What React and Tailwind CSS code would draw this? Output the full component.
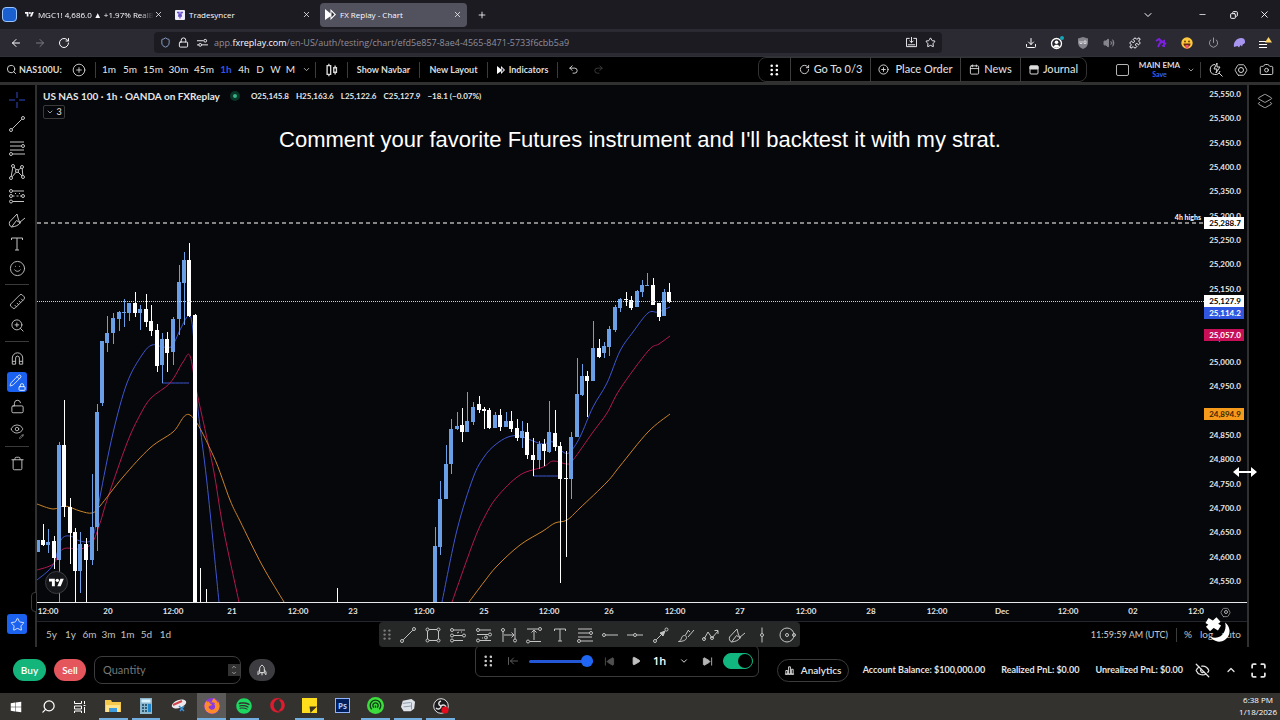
import React from 'react';
import {
    ArrowLeft, ArrowRight, Camera, ChevronDown, ChevronUp, CirclePlus, Copy, Download,
    Eye, EyeOff, Layers2, Lock, LockOpen, Maximize, Minus, Pencil, Play, Plus, Power,
    Puzzle, Redo2, RotateCw, Ruler, Search, Shield, SkipBack, SkipForward,
    Smile, Star, Trash, Undo2, Volume2, X, ZoomIn, Calendar, ArrowLeftToLine, Hexagon,
} from 'lucide-react';
import { FaWindows, FaSpotify, FaOpera, FaFirefoxBrowser } from 'react-icons/fa';

// top-left corner of the plot, candle data is kept in window coordinates
const ORIGIN_X = 37;
const ORIGIN_Y = 85;

// [x, high, bodyTop, bodyBottom, low, up]
const CANDLES = [
    [38, 540, 540, 552, 552, 1], [43, 524, 540, 545, 546, 0], [48, 529, 542, 545, 553, 1],
    [54, 536, 541, 558, 569, 0], [59, 442, 445, 560, 602, 1], [64, 400, 445, 507, 517, 0],
    [70, 498, 507, 533, 564, 0], [75, 528, 532, 571, 602, 0], [80, 532, 544, 571, 593, 1],
    [86, 538, 544, 560, 602, 0], [92, 474, 527, 560, 565, 1], [97, 404, 412, 527, 551, 1],
    [102, 341, 341, 403, 406, 1], [107, 316, 333, 343, 352, 1], [113, 313, 318, 333, 344, 1],
    [119, 311, 312, 319, 331, 1], [124, 299, 312, 313, 327, 1], [129, 303, 303, 313, 321, 1],
    [135, 292, 303, 313, 317, 0], [140, 305, 309, 313, 330, 1], [146, 294, 309, 322, 327, 0],
    [151, 305, 321, 331, 336, 0], [157, 324, 330, 366, 372, 0], [162, 333, 339, 365, 383, 1],
    [167, 332, 339, 353, 372, 0], [173, 317, 319, 352, 365, 1], [179, 265, 282, 319, 335, 1],
    [184, 252, 260, 283, 325, 1], [189, 243, 260, 316, 317, 0], [195, 314, 315, 602, 602, 0],
    [200, 568, 602, 602, 602, 0], [206, 589, 602, 602, 602, 0], [337, 588, 602, 602, 602, 0],
    [435, 527, 546, 602, 602, 1], [440, 481, 499, 547, 555, 1], [446, 445, 464, 499, 499, 1],
    [451, 419, 429, 464, 474, 1], [457, 412, 426, 429, 430, 1], [462, 408, 425, 432, 442, 0],
    [467, 392, 421, 432, 432, 1], [473, 402, 407, 422, 425, 1], [479, 396, 404, 410, 413, 0],
    [484, 407, 409, 411, 429, 0], [489, 408, 410, 428, 429, 0], [495, 412, 415, 428, 428, 1],
    [500, 409, 415, 427, 431, 0], [506, 412, 421, 427, 427, 1], [511, 411, 421, 429, 432, 0],
    [517, 419, 428, 438, 441, 0], [522, 421, 431, 438, 448, 1], [527, 423, 432, 455, 459, 0],
    [533, 438, 455, 460, 476, 0], [539, 441, 444, 460, 469, 1], [544, 439, 444, 451, 466, 0],
    [549, 401, 432, 452, 453, 1], [555, 410, 433, 447, 451, 0], [560, 442, 446, 479, 583, 0],
    [566, 451, 478, 479, 557, 0], [571, 432, 437, 479, 499, 1], [577, 358, 394, 437, 437, 1],
    [582, 364, 376, 395, 396, 1], [587, 371, 376, 381, 417, 0], [593, 321, 348, 381, 381, 1],
    [599, 339, 348, 357, 358, 0], [604, 342, 346, 353, 358, 1], [609, 326, 329, 347, 356, 1],
    [615, 305, 307, 330, 332, 1], [620, 298, 299, 308, 312, 1], [626, 292, 299, 300, 306, 0],
    [631, 296, 300, 308, 310, 0], [637, 290, 291, 307, 307, 1], [642, 280, 285, 292, 297, 1],
    [647, 273, 285, 286, 286, 1], [653, 278, 285, 305, 305, 0], [659, 303, 303, 317, 321, 0],
    [664, 289, 292, 316, 316, 1], [669, 283, 292, 302, 303, 0],
];

const AVERAGES = [
    { color: '#3f56d0', points: '37,580 53,565 61,540 70,536 80,541 91,540 97,520 100,497 113,433 127,383 142,355 152,345 163,347 172,346 180,330 187,317 191,318 194,343 197,400 207,483 219,602' },
    { color: '#3f56d0', points: '442,602 457,530 473,478 484,457 495,445 508,437 520,436 533,441 543,444 553,442 563,452 570,452 580,437 593,407 607,383 620,351 633,332 648,313 658,312 670,307' },
    { color: '#3f56d0', points: '162,383 189,383' },
    { color: '#3f56d0', points: '533,476 560,476' },
    { color: '#b4174f', points: '37,570 53,564 63,549 80,549 92,543 100,523 108,497 127,443 140,415 151,398 170,383 183,362 190,356 197,393 213,467 223,527 239,602' },
    { color: '#b4174f', points: '452,602 473,543 484,518 497,497 520,475 543,467 553,461 567,464 573,460 593,432 607,413 620,389 648,351 659,344 670,336' },
    { color: '#cc8427', points: '37,504 53,509 65,506 80,511 92,513 100,506 123,477 150,448 173,432 190,415 213,455 230,500 240,521 262,565 284,602' },
    { color: '#cc8427', points: '469,602 484,582 497,566 520,545 543,531 555,523 567,520 580,508 607,482 620,466 648,432 670,414' },
];

const TIME_LABELS = [
    [48, '12:00'], [108, '20'], [173, '12:00'], [232, '21'], [298, '12:00'], [353, '23'],
    [424, '12:00'], [484, '25'], [549, '12:00'], [609, '26'], [675, '12:00'], [740, '27'],
    [806, '12:00'], [871, '28'], [937, '12:00'], [1002, 'Dec'], [1068, '12:00'], [1133, '02'],
    [1196, '12:0'],
];

const PRICE_TAGS = [
    { y: 223, text: '25,288.7', box: 'fill-white', label: 'fill-black' },
    { y: 301, text: '25,127.9', box: 'fill-white', label: 'fill-black' },
    { y: 313, text: '25,114.2', box: 'fill-[#3157e0]', label: 'fill-white' },
    { y: 335, text: '25,057.0', box: 'fill-[#c70f57]', label: 'fill-white' },
    { y: 414, text: '24,894.9', box: 'fill-[#f59a1b]', label: 'fill-[#3a2400]' },
];

// one entry every 50 points from 25,550 down to 24,550
const PRICES = Array.from({ length: 21 }, (_, i) => 25550 - i * 50);

const formatPrice = (price) => price.toLocaleString('en-US', { minimumFractionDigits: 1 });

// Catmull-Rom spline through the points, written as cubic segments
function smoothPath(points) {
    const pts = points.split(' ').map((p) => p.split(',').map(Number));
    let d = `M${pts[0]}`;
    for (let i = 0; i < pts.length - 1; i++) {
        const [x0, y0] = pts[i - 1] || pts[i];
        const [x1, y1] = pts[i];
        const [x2, y2] = pts[i + 1];
        const [x3, y3] = pts[i + 2] || pts[i + 1];
        d += `C${x1 + (x2 - x0) / 6},${y1 + (y2 - y0) / 6} ${x2 - (x3 - x1) / 6},${y2 - (y3 - y1) / 6} ${x2},${y2}`;
    }
    return d;
}

// drawing tool glyphs on an 18px grid
const GLYPHS = {
    cross: { d: 'M9 1v6M9 11v6M1 9h6M11 9h6' },
    trend: { d: 'M4.2 13.8 13.8 4.2', dots: [[3, 15], [15, 3]] },
    fib: { d: 'M2 3h14M2 7h11.5M2 11h14M4.5 15h12.5', dots: [[15, 7], [3, 15]] },
    pattern: { d: 'M4.8 4.4 3.2 13.5M4 13.9l4.2-4.8M10 9l4 4M14.2 5.4l.6 7.2M13 5 10 7.2M6 4l2.2 3', dots: [[5, 3], [14, 4], [9, 8], [3, 15], [15, 14]] },
    forecast: { d: 'M4.5 4H16M4.5 9h2M8.5 9h2M12 9h1.5M4.5 14.5H16M7 6.5h1M11 6.5h1', dots: [[3, 4], [3, 9], [15, 9], [3, 14.5]] },
    brush: { d: 'M1.5 11 9 3l1.5 6 2 2.500c-2 3-5 4-9 4.500C1.500 15 1 13 1.500 11zM3.500 16l5-6.500 4 2.500M11.500 11.500 17 7' },
    text: { d: 'M3.500 5V3h11v2M9 3v12M7 15h4' },
    rect: { d: 'M5 3.500h8M5 14.500h8M3.500 5v8M14.500 5v8', dots: [[3.500, 3.500], [14.500, 3.500], [3.500, 14.500], [14.500, 14.500]] },
    longPos: { d: 'M4.500 4H16M4.500 9.500h9M4.500 14.500H14M8 7l2-1M12 6h1', dots: [[3, 4], [3, 9.500], [15, 9.500], [3, 14.500]] },
    shortPos: { d: 'M4.500 4H16M2 8.500h11M4.500 14.500H16M7 12h1M11 11h1', dots: [[3, 4], [15, 8.500], [3, 14.500], [11, 11.500]] },
    dateRange: { d: 'M3 5v11M15 2v11M4 9h10M11.500 6.500 14 9l-2.500 2.500', dots: [[3, 4], [15, 14.500]] },
    priceRange: { d: 'M2 3h11M5 15.500h11M9 4v10M6.500 6.500 9 4l2.500 2.500', dots: [[15, 3], [3, 15.500]] },
    ray: { d: 'M4.500 9H17', dots: [[3, 9]] },
    hline: { d: 'M1 9h6.500M10.500 9H17', dots: [[9, 9]] },
    arrow: { d: 'M4.200 13.800 13 5M8 7l5-2-2 5z', dots: [[3, 15], [14.500, 3.500]], solid: true },
    highlighter: { d: 'M1.500 15.500c4-1 2-6 6-6 3 0 4 6-6 6zM8.500 9l3-5M11 11l6-7M11 4l2 2' },
    path: { d: 'M2 13 6 6l4 6 6-7M12.500 4.500H16V8', dots: [[2, 13], [10, 12]] },
    vline: { d: 'M9 1.500v6M9 10.500v6', dots: [[9, 9]] },
    circle: { d: 'M16 9A7 7 0 1 1 2 9a7 7 0 0 1 14 0z', dots: [[16, 9], [9, 9]] },
    magnet: { d: 'M3.500 15V8.500a5.500 5.500 0 0 1 11 0V15h-3.500V8.500a2 2 0 0 0-4 0V15zM3.500 12H7M11 12h3.500' },
    candles: { d: 'M5.500 2v2M5.500 14v2M3.500 4h4v10h-4zM12.500 4v2.500M12.500 11.500V14M11 6.500h3v5h-3z' },
    bars: { d: 'M3 15V9h3v6zM7.500 15V3h3v12zM12 15V7h3v8zM1.500 15h15' },
    rocket: { d: 'M5.500 13V7c0-2 1.500-4 3.500-5.500C11 3 12.500 5 12.500 7v6zM5.500 9 3 11.500V16l2.500-2.500M12.500 9l2.500 2.500V16l-2.500-2.500M9 12v5' },
};

const FAVOURITES = [
    'trend', 'rect', 'longPos', 'shortPos', 'dateRange', 'priceRange', 'text', 'fib',
    'ray', 'hline', 'arrow', 'highlighter', 'path', 'brush', 'vline', 'circle',
];

function Glyph({ name, size = 18, weight = 1 }) {
    const { d, dots = [], solid } = GLYPHS[name];
    return (
        <svg width={size} height={size} viewBox="0 0 18 18" fill="none" stroke="currentColor" strokeWidth={weight}>
            <path d={d} fill={solid ? 'currentColor' : 'none'} />
            {dots.map(([cx, cy]) => <circle key={`${cx}-${cy}`} cx={cx} cy={cy} r="1.500" />)}
        </svg>
    );
}

function TradingViewMark({ className }) {
    return (
        <svg viewBox="0 0 36 26" fill="currentColor" className={className}>
            <path d="M14 22H7V11H0V4h14v18zM28 22h-8l7.500-18h8L28 22z" />
            <circle cx="20" cy="8" r="4" />
        </svg>
    );
}

function ReplayMark({ className }) {
    return (
        <svg viewBox="0 0 12 12" className={className}>
            <path d="M0 0l6 5v-5l6 6-6 6V8l-6 4z" fill="#fff" />
            <path d="M7 2.800 10.200 6 7 9.200z" fill="#33323c" />
        </svg>
    );
}

function DragDots({ className }) {
    return (
        <svg viewBox="0 0 10 14" fill="currentColor" className={className}>
            {[2, 7, 12].map((y) => [2, 8].map((x) => <circle key={`${x}-${y}`} cx={x} cy={y} r="1.500" />))}
        </svg>
    );
}

function IconButton({ label, className = '', children }) {
    return (
        <button type="button" aria-label={label} className={`flex shrink-0 items-center justify-center ${className}`}>
            {children}
        </button>
    );
}

function Divider({ className = 'h-4' }) {
    return <div className={`w-px shrink-0 bg-[#3c3c3c] ${className}`} />;
}

function TabStrip() {
    return (
        <div className="flex h-[29px] shrink-0 items-center bg-[#1c1b22] text-[8px] font-medium text-[#fbfbfe]">
            <div className="ml-0.5 size-[15px] rounded-[4px] border border-[#9cc4ff] bg-[#1a5fd0]" />
            <div className="ml-2 flex w-[138px] items-center">
                <TradingViewMark className="w-[10px]" />
                <span className="ml-1 flex-1 whitespace-nowrap [mask-image:linear-gradient(to_right,#000_88%,transparent)]">MGC1! 4,686.0 ▲ +1.97% RealB</span>
                <IconButton label="Close tab"><X size={9} /></IconButton>
            </div>
            <div className="ml-3 flex w-[136px] items-center">
                <svg viewBox="0 0 10 10" className="size-[10px]">
                    <rect width="10" height="10" rx="1" fill="#f1eefc" />
                    <path d="M2 2.500h2v2h2v-2h2M3 6h4M5 4.500v4" stroke="#6552c8" strokeWidth="1.300" fill="none" />
                </svg>
                <span className="ml-1 flex-1">Tradesyncer</span>
                <IconButton label="Close tab"><X size={9} /></IconButton>
            </div>
            <div className="ml-[9px] flex h-6 w-[147px] items-center rounded-[4px] bg-[#52515e] px-[5px]">
                <ReplayMark className="size-[11px]" />
                <span className="ml-1 flex-1">FX Replay - Chart</span>
                <IconButton label="Close tab"><X size={9} /></IconButton>
            </div>
            <IconButton label="New tab" className="ml-2.5"><Plus size={10} /></IconButton>
            <div className="ml-auto flex items-center">
                <IconButton label="List tabs" className="mr-6 w-[31px]"><ChevronDown size={12} /></IconButton>
                <IconButton label="Minimize" className="w-[31px]"><Minus size={9} /></IconButton>
                <IconButton label="Restore" className="w-[31px]"><Copy size={8} strokeWidth={3} className="-scale-x-100" /></IconButton>
                <IconButton label="Close window" className="w-[31px]"><X size={11} /></IconButton>
            </div>
        </div>
    );
}

function AddressBar() {
    return (
        <div className="flex h-[27px] shrink-0 items-center bg-[#2b2a33] text-[#fbfbfe]">
            <div className="flex w-[154px] shrink-0 items-center pl-1">
                <IconButton label="Back" className="w-6"><ArrowLeft size={12} /></IconButton>
                <IconButton label="Forward" className="w-6 text-[#7b7a84]"><ArrowRight size={12} /></IconButton>
                <IconButton label="Reload" className="w-6"><RotateCw size={12} /></IconButton>
            </div>
            <div className="flex h-[21px] flex-1 items-center rounded-[4px] bg-[#1c1b22] px-1.5">
                <Shield size={11} className="text-[#8fa9cf]" />
                <Lock size={11} className="ml-[7px]" />
                <svg viewBox="0 0 12 10" className="ml-2 w-[11px]" fill="none" stroke="currentColor">
                    <path d="M0 3h7M5 7.500h7M0 7.500h2" />
                    <circle cx="9" cy="3" r="1.500" />
                    <circle cx="3.500" cy="7.500" r="1.500" />
                </svg>
                <span className="ml-1.5 flex-1 text-[9px] text-[#8f8e99]">
                    app.<span className="text-[#fbfbfe]">fxreplay.com</span>/en-US/auth/testing/chart/efd5e857-8ae4-4565-8471-5733f6cbb5a9
                </span>
                <svg viewBox="0 0 12 12" className="size-[11px]" fill="none" stroke="currentColor">
                    <path d="M4 1.500H.500v9h11v-9H8M6 0v6M3.800 4 6 6.200 8.200 4M2 8.500h8" />
                </svg>
                <IconButton label="Bookmark this page" className="ml-2"><Star size={11} /></IconButton>
            </div>
            <div className="ml-[76px] mr-[2px] flex">
                <IconButton label="Downloads" className="w-[26px]"><Download size={12} /></IconButton>
                <IconButton label="Account" className="w-[26px]">
                    <svg viewBox="0 0 14 14" className="size-[14px]">
                        <circle cx="6.500" cy="7.500" r="5" fill="none" stroke="#fff" strokeWidth="1.300" />
                        <circle cx="6.500" cy="6.300" r="1.800" fill="#fff" />
                        <path d="M3.500 10.500c1-2.500 5-2.500 6 0-1 1.500-5 1.500-6 0z" fill="#fff" />
                        <circle cx="12" cy="2" r="2" fill="#14a6b5" />
                    </svg>
                </IconButton>
                <IconButton label="Content blocker" className="w-[26px]">
                    <svg viewBox="0 0 12 12" className="size-3">
                        <path d="M6 0 11 1.500v4C11 9 8.500 11 6 12 3.500 11 1 9 1 5.500v-4z" fill="#85848d" />
                        <path d="M3 4v2.500h2V4M7 4h2v2.500H7z" stroke="#d7d6dc" fill="none" />
                    </svg>
                </IconButton>
                <IconButton label="Volume" className="w-[26px] text-[#85848d]"><Volume2 size={12} fill="currentColor" /></IconButton>
                <IconButton label="Extensions" className="w-[26px]"><Puzzle size={12} /></IconButton>
                <IconButton label="Trading extension" className="w-[26px]">
                    <svg viewBox="0 0 12 12" className="size-3" fill="none" stroke="#7a1fe0" strokeWidth="2">
                        <path d="M1 4l3-2 2 2-3 6M5 6l4-2v6M7 9l4-3" />
                    </svg>
                </IconButton>
                <IconButton label="Emoji" className="w-[26px]">
                    <svg viewBox="0 0 12 12" className="size-3">
                        <circle cx="6" cy="6" r="5.700" fill="#ffc83d" />
                        <circle cx="4" cy="4.500" r=".9" fill="#5b3a00" />
                        <circle cx="8" cy="4.500" r=".9" fill="#5b3a00" />
                        <path d="M2.500 6.500h7c0 2-1.500 3.500-3.500 3.500S2.500 8.500 2.500 6.500z" fill="#6b2b12" />
                        <path d="M4.500 8h3v2.500c-.5 1.300-2.500 1.300-3 0z" fill="#f2507b" />
                    </svg>
                </IconButton>
                <IconButton label="Power" className="w-[26px] text-[#a3a2ab]"><Power size={11} /></IconButton>
                <IconButton label="Feather" className="w-[26px]">
                    <svg viewBox="0 0 12 12" className="size-3">
                        <path d="M1 10C0 5 4 1 8 1c3 0 4 1.500 4 4 0 1.500-1 2-2 2L9 9.500 7.500 8 6 10.500 4.500 9z" fill="#a795ef" />
                    </svg>
                </IconButton>
                <IconButton label="Open menu" className="w-[26px]">
                    <svg viewBox="0 0 14 12" className="w-[14px]" fill="none" stroke="#fff">
                        <path d="M1 4.500h7M1 7.500h8M1 10.500h8" />
                        <path d="M10.500 0l3.500 5.500H7z" fill="#ffd567" stroke="none" />
                    </svg>
                </IconButton>
            </div>
        </div>
    );
}

function ChartToolbar() {
    const intervals = [
        ['1m', 'w-5'], ['5m', 'w-[22px]'], ['15m', 'w-6'], ['30m', 'w-[27px]'], ['45m', 'w-6'],
        ['1h', 'w-5'], ['4h', 'w-4'], ['D', 'w-4'], ['W', 'w-[15px]'], ['M', 'w-[15px]'],
    ];
    return (
        <div className="flex h-[26px] shrink-0 items-center border-t border-[#303038] bg-black text-[10px] font-medium text-[#dcdcdc]">
            <button type="button" className="flex w-[62px] items-center gap-0.5 whitespace-nowrap pl-1.5 text-[9px] font-bold">
                <Search size={11} className="shrink-0" />
                NAS100U:
            </button>
            <IconButton label="Compare symbol" className="w-[33px]"><CirclePlus size={14} strokeWidth={1.500} /></IconButton>
            <Divider />
            <div className="ml-[3px] flex">
                {intervals.map(([name, width]) => (
                    <button key={name} type="button" className={`${width} text-center ${name === '1h' ? 'font-bold text-[#2f55e8]' : ''}`}>{name}</button>
                ))}
            </div>
            <IconButton label="More intervals" className="w-[17px]"><ChevronDown size={9} /></IconButton>
            <Divider />
            <IconButton label="Chart type" className="w-[31px]"><Glyph name="candles" size={16} weight={1.5} /></IconButton>
            <Divider />
            <button type="button" className="w-[71px] text-center text-[9px] font-bold">Show Navbar</button>
            <Divider />
            <button type="button" className="w-[67px] text-center text-[9px] font-bold">New Layout</button>
            <Divider />
            <button type="button" className="flex w-[69px] items-center justify-center gap-1 text-[9px] font-bold">
                <ReplayMark className="size-2" />
                Indicators
            </button>
            <Divider />
            <IconButton label="Undo" className="w-[30px]"><Undo2 size={11} /></IconButton>
            <IconButton label="Redo" className="w-5 text-[#3f3f3f]"><Redo2 size={11} /></IconButton>

            <div className="ml-auto flex h-[25px] items-center rounded-lg border border-[#333] text-[11px]">
                <IconButton label="Move panel" className="w-[31px]"><DragDots className="h-3 text-white" /></IconButton>
                <Divider className="h-[25px]" />
                <button type="button" className="flex w-[79px] items-center justify-center gap-1"><RotateCw size={11} />Go To 0/3</button>
                <Divider className="h-[25px]" />
                <button type="button" className="flex w-[89px] items-center justify-center gap-1.5"><CirclePlus size={11} />Place Order</button>
                <Divider className="h-[25px]" />
                <button type="button" className="flex w-[59px] items-center justify-center gap-1"><Calendar size={11} />News</button>
                <Divider className="h-[25px]" />
                <button type="button" className="flex w-[65px] items-center justify-center gap-1">
                    <svg viewBox="0 0 10 10" className="size-[10px]" fill="none" stroke="currentColor">
                        <rect x="1" y="1" width="8" height="8" rx="1" />
                        <path d="M1 1h8v3H1z" fill="currentColor" />
                    </svg>
                    Journal
                </button>
            </div>

            <div className="ml-[29px] flex items-center">
                <div className="h-3 w-[13px] rounded-[2px] border border-[#b5b5b5]" />
                <button type="button" className="flex w-[59px] flex-col items-center pl-0.5 text-[8px] font-bold leading-[9px] whitespace-nowrap">
                    MAIN EMA
                    <span className="text-[7px] leading-[8px] text-[#2f62f5]">Save</span>
                </button>
                <IconButton label="Layouts" className="mr-1.5 w-[6px]"><ChevronDown size={8} className="shrink-0" /></IconButton>
                <Divider />
                <IconButton label="Quick search" className="w-[29px]">
                    <svg viewBox="0 0 14 14" className="size-[14px]" fill="none" stroke="currentColor">
                        <path d="M6 1.500a5 5 0 1 0 5 6.500M10 10l3.500 3.500M8 0 5 6h3l-1 4 4-6H8z" />
                    </svg>
                </IconButton>
                <IconButton label="Settings" className="w-[22px]">
                    <span className="grid place-items-center">
                        <Hexagon size={14} strokeWidth={1.500} className="col-start-1 row-start-1 rotate-90" />
                        <span className="col-start-1 row-start-1 size-1.5 rounded-full border border-current" />
                    </span>
                </IconButton>
                <IconButton label="Snapshot" className="w-[28px]"><Camera size={15} strokeWidth={1.500} /></IconButton>
            </div>
        </div>
    );
}

function ToolRail() {
    const separator = <div className="flex h-[9px] w-6 items-center"><div className="h-px w-full bg-[#3a3a3a]" /></div>;
    const tool = (label, icon) => <IconButton label={label} className="size-6">{icon}</IconButton>;
    return (
        <div className="flex w-[35px] shrink-0 flex-col items-center bg-black pr-px pt-[3px] text-[#c4c4c4]">
            <IconButton label="Cross" className="size-6 text-[#3148c8]"><Glyph name="cross" /></IconButton>
            {tool('Trend line', <Glyph name="trend" />)}
            {tool('Fib retracement', <Glyph name="fib" />)}
            {tool('Patterns', <Glyph name="pattern" />)}
            {tool('Forecasting', <Glyph name="forecast" />)}
            {tool('Brush', <Glyph name="brush" />)}
            {tool('Text', <Glyph name="text" />)}
            {tool('Icons', <Smile size={17} strokeWidth={1.300} />)}
            {separator}
            {tool('Measure', <Ruler size={17} strokeWidth={1.300} className="rotate-90" />)}
            {tool('Zoom in', <ZoomIn size={15} strokeWidth={1.500} />)}
            {separator}
            {tool('Magnet', <Glyph name="magnet" size={17} />)}
            <IconButton label="Stay in drawing mode" className="h-6 w-5">
                <span className="grid size-5 place-items-center rounded-[3px] bg-[#1b62f0] text-white">
                    <Pencil size={13} strokeWidth={1.500} className="col-start-1 row-start-1 mb-1 mr-1" />
                    <Lock size={8} strokeWidth={2.500} className="col-start-1 row-start-1 ml-2.5 mt-2.5" />
                </span>
            </IconButton>
            {tool('Lock drawings', <LockOpen size={15} strokeWidth={1.500} />)}
            <IconButton label="Hide drawings" className="size-6">
                <span className="flex flex-col items-end">
                    <Eye size={14} strokeWidth={1.500} />
                    <Pencil size={5} strokeWidth={2.500} className="-mt-0.5" />
                </span>
            </IconButton>
            {separator}
            {tool('Remove drawings', <Trash size={15} strokeWidth={1.500} />)}
            <IconButton label="Favorites" className="mb-[13px] mt-auto size-5 rounded-[3px] bg-[#1b62f0] text-white"><Star size={15} strokeWidth={1.300} /></IconButton>
        </div>
    );
}

function Plot() {
    return (
        <svg className="block size-full">
            <g transform={`translate(${-ORIGIN_X} ${-ORIGIN_Y})`}>
                {AVERAGES.map(({ color, points }) => (
                    <path key={points} d={smoothPath(points)} fill="none" stroke={color} strokeWidth="1" />
                ))}
                <g shapeRendering="crispEdges">
                    {CANDLES.map(([x, high, top, bottom, low, up]) => (
                        <g key={x} fill={up ? '#6a9fe6' : '#ffffff'}>
                            <rect x={x} y={high} width="1" height={low - high} />
                            <rect x={x - 2} y={top} width="4" height={bottom - top} />
                        </g>
                    ))}
                </g>
            </g>
            <line x1="0" x2="100%" y1="138" y2="138" stroke="#858585" strokeWidth="2" strokeDasharray="4 3" />
            <line x1="0" x2="100%" y1="216.5" y2="216.5" stroke="#d0d0d0" strokeDasharray="1 1" />
        </svg>
    );
}

function PriceScale() {
    return (
        <svg className="block h-full w-[43px] shrink-0 text-[8px] font-bold">
            {PRICES.map((price, i) => (
                <text key={price} x="21" y={Math.round(i * 24.35) + 12} textAnchor="middle" className="fill-[#e4e4e4]">{formatPrice(price)}</text>
            ))}
            {PRICE_TAGS.map(({ y, text, box, label }) => (
                <g key={text}>
                    <rect x="0" y={y - ORIGIN_Y - 6} width="40" height="12" className={box} />
                    <text x="21" y={y - ORIGIN_Y + 3} textAnchor="middle" className={label}>{text}</text>
                </g>
            ))}
        </svg>
    );
}

function ChartPane() {
    return (
        <div className="flex min-w-0 flex-1 flex-col border-x-2 border-[#303030] bg-[#05070b]">
            <div className="relative flex min-h-0 flex-1 border-b border-[#e8e8e8]">
                <div className="min-w-0 flex-1"><Plot /></div>
                <PriceScale />
                <div className="absolute left-1.5 top-1 text-[#e6e6e6]">
                    <div className="flex items-center whitespace-nowrap">
                        <h1 className="text-[10px] font-bold leading-[14px]">US NAS 100 · 1h · OANDA on FXReplay</h1>
                        <span className="ml-2.5 size-2.5 rounded-full border-[3px] border-[#0a3527] bg-[#35b487]" />
                        <span className="ml-[11px] flex gap-[7px] text-[8px] font-bold">
                            <span>O25,145.8</span>
                            <span>H25,163.6</span>
                            <span>L25,122.6</span>
                            <span>C25,127.9</span>
                            <span>−18.1 (−0.07%)</span>
                        </span>
                    </div>
                    <button type="button" className="mt-0.5 flex h-3.5 w-[22px] items-center justify-center gap-0.5 rounded-[2px] border border-[#3a3a3a] text-[9px]">
                        <ChevronDown size={8} />3
                    </button>
                </div>
                <p className="absolute inset-x-0 top-[43px] pr-1 text-center font-['Liberation_Sans',sans-serif] text-[22px] leading-6 text-white">
                    Comment your favorite Futures instrument and I'll backtest it with my strat.
                </p>
                <span className="absolute right-[46px] top-[127px] text-[7px] font-bold leading-[10px] text-white">4h highs</span>
                <div className="absolute bottom-2 left-2 flex size-[23px] items-center justify-center rounded-full border border-[#3c3d42] bg-[#15161a] text-white">
                    <TradingViewMark className="w-[15px]" />
                </div>
                <div className="absolute -bottom-2.5 -left-1.5 h-5 w-1.5 rounded-l border border-[#3a3a3a] bg-black" />
                <svg viewBox="0 0 24 12" className="absolute -right-2.5 top-[381px] z-10 w-6" fill="#fff">
                    <path d="M0 6l6-5v4h12V1l6 5-6 5V7H6v4z" />
                </svg>
            </div>
            <div className="flex h-[19px] shrink-0 items-center border-b border-[#24262b]">
                <svg className="h-[18px] min-w-0 flex-1 text-[8px] font-bold">
                    {TIME_LABELS.map(([x, text]) => (
                        <text key={x} x={x - ORIGIN_X} y="11" textAnchor="middle" className="fill-[#e4e4e4]">{text}</text>
                    ))}
                </svg>
                <IconButton label="Scale settings" className="w-[43px] text-[#b0b0b0]">
                    <span className="grid place-items-center">
                        <Hexagon size={11} strokeWidth={1.500} className="col-start-1 row-start-1 rotate-90" />
                        <span className="col-start-1 row-start-1 size-1 rounded-full border border-current" />
                    </span>
                </IconButton>
            </div>
            <div className="flex h-[25px] shrink-0 items-center bg-black pl-[5px] pr-1.5 text-[10px] text-[#c2c2c2]">
                {['5y', '1y', '6m', '3m', '1m', '5d', '1d'].map((range) => (
                    <button key={range} type="button" className="w-[19px] text-center">{range}</button>
                ))}
                <button type="button" className="ml-auto mr-2 text-[9px] font-medium">11:59:59 AM (UTC)</button>
                <Divider className="h-3.5" />
                <button type="button" className="ml-[7px]">%</button>
                <button type="button" className="ml-2">log</button>
                <button type="button" className="ml-2">auto</button>
            </div>
        </div>
    );
}

function FavouritesBar() {
    return (
        <div className="absolute left-[379px] top-[622px] flex h-[25px] w-[421px] items-center rounded bg-[#262727] pl-1 text-[#c4c4c4]">
            <DragDots className="mr-1 w-2 text-[#7c7c7c]" />
            {FAVOURITES.map((name) => (
                <IconButton key={name} label={name} className="flex-1"><Glyph name={name} /></IconButton>
            ))}
        </div>
    );
}

function PlaybackBar() {
    return (
        <div className="absolute left-[475px] top-[645px] flex h-8 w-[284px] items-center rounded-md border border-[#3a3a3a] bg-black text-[#a9a9a9]">
            <IconButton label="Move playback bar" className="w-6 text-[#c9c9c9]"><DragDots className="h-3" /></IconButton>
            <IconButton label="Jump to start" className="w-[26px] text-[#5c5c5c]"><ArrowLeftToLine size={12} /></IconButton>
            <input
                type="range"
                aria-label="Playback speed"
                defaultValue="100"
                className="ml-[3px] h-[3px] w-16 appearance-none rounded-full bg-[#2457d6] [&::-webkit-slider-thumb]:size-3 [&::-webkit-slider-thumb]:appearance-none [&::-webkit-slider-thumb]:rounded-full [&::-webkit-slider-thumb]:bg-[#1f66f5]"
            />
            <IconButton label="Step back" className="w-8 text-[#505050]"><SkipBack size={11} fill="currentColor" /></IconButton>
            <IconButton label="Play" className="w-[22px] text-[#c0c0c0]"><Play size={10} fill="currentColor" /></IconButton>
            <div className="ml-1.5 flex items-center text-white">
                <select aria-label="Step interval" defaultValue="1h" className="w-[26px] appearance-none bg-transparent text-[11px] font-semibold">
                    <option>1h</option>
                    <option>4h</option>
                </select>
                <ChevronDown size={10} />
            </div>
            <IconButton label="Step forward" className="w-9 text-[#b5b5b5]"><SkipForward size={11} fill="currentColor" /></IconButton>
            <input
                type="checkbox"
                role="switch"
                aria-label="Replay mode"
                defaultChecked
                className="-ml-0.5 flex h-4 w-[30px] appearance-none items-center justify-end rounded-full border border-[#12b77f] bg-[#12b77f] before:size-3.5 before:rounded-full before:bg-black"
            />
        </div>
    );
}

function OrderBar() {
    return (
        <div className="flex h-[46px] shrink-0 items-center bg-black pl-[13px] text-[10px] font-semibold text-[#e4e4e4]">
            <button type="button" className="h-[22px] w-[33px] rounded-full bg-[#13b57b] text-white">Buy</button>
            <button type="button" className="ml-2 h-[22px] w-8 rounded-full bg-[#e5555c] text-white">Sell</button>
            <div className="ml-2 flex h-7 w-[147px] items-center rounded-lg border border-[#3c3c3c] pl-2">
                <input aria-label="Quantity" placeholder="Quantity" className="min-w-0 flex-1 bg-transparent text-[11px] font-normal outline-none placeholder:text-[#777]" />
                <div className="flex h-3 w-3 flex-col items-center justify-center bg-[#333] text-[#bbb]">
                    <ChevronUp size={6} strokeWidth={3} />
                    <ChevronDown size={6} strokeWidth={3} />
                </div>
            </div>
            <IconButton label="Quick order" className="ml-2 h-[22px] w-[26px] rounded-full bg-[#3d3d41]"><Glyph name="rocket" size={12} weight={1.5} /></IconButton>
            <button type="button" className="ml-auto flex h-[23px] w-[72px] items-center justify-center gap-1.5 rounded-full border border-[#3c3c3c]">
                <Glyph name="bars" size={11} weight={1.5} />
                Analytics
            </button>
            <div className="ml-3.5 flex gap-4 text-[9px] font-bold">
                <span>Account Balance: $100,000.00</span>
                <span>Realized PnL: $0.00</span>
                <span>Unrealized PnL: $0.00</span>
            </div>
            <IconButton label="Hide balances" className="ml-1 w-[31px]"><EyeOff size={15} /></IconButton>
            <IconButton label="Expand" className="w-[26px]"><ChevronUp size={12} strokeWidth={2.500} /></IconButton>
            <IconButton label="Fullscreen" className="mr-2 w-[28px]"><Maximize size={17} strokeWidth={2.500} /></IconButton>
        </div>
    );
}

function Taskbar() {
    const apps = [
        { name: 'File Explorer', open: true, icon: (
            <svg viewBox="0 0 16 14" className="w-4"><path d="M0 1h6l1 2h9v10H0z" fill="#f5c84c" /><path d="M1 6h14v7H1z" fill="#ffe28a" /><path d="M4 9h8v4H4z" fill="#3f9be0" /></svg>
        ) },
        { name: 'Calculator', open: true, icon: (
            <svg viewBox="0 0 14 16" className="h-4"><path d="M1 0h12v16H1z" fill="#8fb7cc" /><path d="M2.500 1.500h9v3h-9z" fill="#d9f3ff" /><path d="M3 6h2v2H3zM6 6h2v2H6zM3 9h2v2H3zM6 9h2v2H6zM3 12h2v2H3zM6 12h2v2H6z" fill="#2d5f7d" /><path d="M9 6h3v8H9z" fill="#1f86c9" /></svg>
        ) },
        { name: 'Snipping Tool', icon: (
            <svg viewBox="0 0 16 14" className="w-4"><ellipse cx="8" cy="5" rx="7.500" ry="4" fill="#e9e9ee" transform="rotate(-20 8 5)" /><path d="M2 6l9-4" stroke="#d6454c" strokeWidth="2" /><path d="M8 7l5 5M13 7l-4 5" stroke="#3f8fd4" strokeWidth="1.500" /></svg>
        ) },
        { name: 'Firefox', open: true, active: true, icon: <FaFirefoxBrowser size={16} className="rounded-full bg-[#8a3be0] text-[#ff8a2a]" /> },
        { name: 'Spotify', open: true, icon: <FaSpotify size={16} className="text-[#1ed760]" /> },
        { name: 'Opera', icon: <FaOpera size={15} className="text-[#e01b2f]" /> },
        { name: 'Sticky Notes', open: true, icon: (
            <svg viewBox="0 0 16 16" className="size-[15px]"><path d="M0 0h16v16H0z" fill="#ffdd1c" /><path d="M8 9h8l-7 7z" fill="#3a3420" /></svg>
        ) },
        { name: 'Photoshop', icon: <span className="flex size-[15px] items-center justify-center border border-[#8fb4ff] bg-[#001e5c] text-[8px] font-bold text-[#a8c6ff]">Ps</span> },
        { name: 'Audio Manager', open: true, icon: (
            <svg viewBox="0 0 16 16" className="size-[17px]"><circle cx="8" cy="8" r="8" fill="#3ddc3d" /><path d="M4.500 11.500a5 5 0 1 1 7 0M6.500 10a2.500 2.500 0 1 1 3 0M8 8v2" fill="none" stroke="#0d3f14" strokeWidth="1.300" /></svg>
        ) },
        { name: 'Registry', open: true, icon: (
            <svg viewBox="0 0 16 14" className="w-[14px]"><path d="M2 2l10-2 4 3-1 8-4 3H3l-3-5z" fill="#dfe4ea" /><path d="M2 5l9-1M3 9l9-1M12 4v8" stroke="#8294a8" /></svg>
        ) },
        { name: 'OBS Studio', open: true, icon: (
            <svg viewBox="0 0 16 16" className="size-4"><circle cx="8" cy="8" r="7.300" fill="#1b1b1e" stroke="#e2e2e2" /><path d="M8 8c-3-1-3-4 0-5M8 8c2-2 5-1 5 2M8 8c0 3-3 4-5 2" stroke="#e2e2e2" strokeWidth="1.500" fill="none" /><circle cx="12" cy="12" r="3.500" fill="#e30b1c" /></svg>
        ) },
    ];
    return (
        <div className="flex h-[27px] shrink-0 bg-[#34322f] text-white">
            <IconButton label="Start" className="w-8"><FaWindows size={12} /></IconButton>
            <IconButton label="Search" className="w-8"><Search size={15} className="-scale-x-100" /></IconButton>
            <IconButton label="Task view" className="w-8">
                <svg viewBox="0 0 12 12" className="size-3" fill="none" stroke="currentColor"><path d="M.500 0v2.500h7V0M.500 5h7v3h-7zM.500 12v-2h7v2M10.500 0v3M10.500 6v6M9.500 4.500h2" /></svg>
            </IconButton>
            <div className="ml-px flex w-[360px] shrink-0">
                {apps.map(({ name, open, active, icon }) => (
                    <div key={name} className="flex-1 px-0.5">
                        <button type="button" aria-label={name} className={`flex h-full w-full items-center justify-center border-b-2 ${open ? 'border-[#72aee0]' : 'border-transparent'} ${active ? 'bg-[#5c5a58]' : ''}`}>{icon}</button>
                    </div>
                ))}
            </div>
            <div className="ml-auto mr-[3px] flex flex-col items-center pt-px font-['Open_Sans',sans-serif] text-[8px] leading-3">
                <div>6:38 PM</div>
                <div>1/18/2026</div>
            </div>
        </div>
    );
}

export default function App() {
    return (
        <div className="relative flex h-screen flex-col overflow-hidden bg-black font-['Open_Sans',sans-serif]">
            <TabStrip />
            <AddressBar />
            <div className="flex min-h-0 flex-1 flex-col font-['Lato',sans-serif]">
                <ChartToolbar />
                <div className="flex min-h-0 flex-1 border-t-[3px] border-[#303030]">
                    <ToolRail />
                    <ChartPane />
                    <div className="flex w-[31px] shrink-0 items-start justify-center bg-black pt-2 text-[#b8b8b8]">
                        <IconButton label="Object tree" className="h-4"><Layers2 size={16} strokeWidth={1.300} /></IconButton>
                    </div>
                </div>
                <OrderBar />
            </div>
            <Taskbar />
            <PlaybackBar />
            <FavouritesBar />
            <svg viewBox="0 0 30 30" className="absolute right-[47px] top-[614px] size-[30px]" fill="#fff">
                <path d="M22 8.500a10.500 10.500 0 1 1-15 14c4 2 9 1.500 12-1.500s4.500-8 3-12.500z" />
                <path d="M4 6.500 16.500 14M15.500 5.500 5 15" stroke="#fff" strokeWidth="6" />
            </svg>
        </div>
    );
}
